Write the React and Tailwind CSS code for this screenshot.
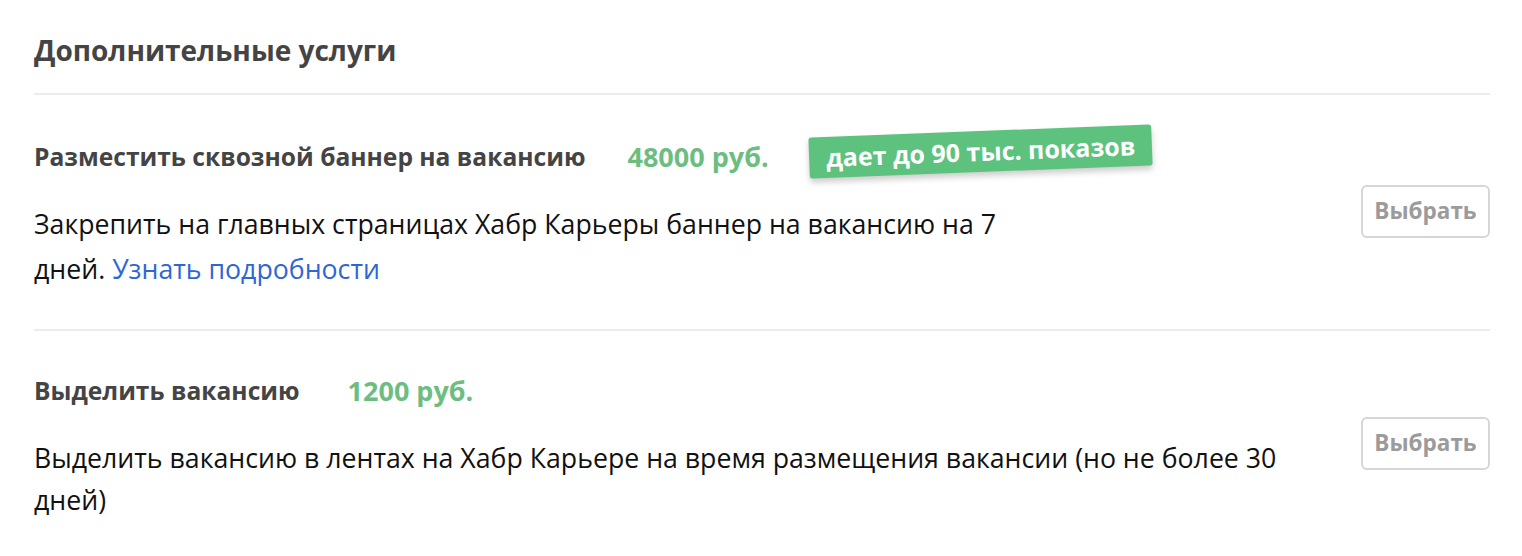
export default function App() {
  return (
    <div className="min-h-screen bg-white pl-[34px] pr-[32px] pt-[28px] font-['Open_Sans',sans-serif]">
      <h2 className="text-[28px] font-bold leading-[44px] text-[#444]">Дополнительные услуги</h2>
      <div className="mt-[21px] border-t-2 border-[#ececec]" />

      <div className="flex items-center justify-between pt-[40px] pb-[38px]">
        <div>
          <div className="flex items-center text-[24.6px] font-bold leading-[44px]">
            <span className="text-[#444]">Разместить сквозной баннер на вакансию</span>
            <span className="ml-[42px] text-[27px] text-[#6dbd80]">48000 руб.</span>
            <span className="ml-[40px] -mt-[12px] rotate-[-2.2deg] rounded-[3px] bg-[#5ec27f] px-[17px] text-[25px] leading-[41px] text-white shadow-[0_4px_6px_rgba(0,0,0,0.2)]">
              дает до 90 тыс. показов
            </span>
          </div>
          <p className="mt-[22px] text-[26.7px] leading-[45px] text-[#111]">
            Закрепить на главных страницах Хабр Карьеры баннер на вакансию на 7
            <br />
            дней. <a href="#" className="text-[#2e66d6]">Узнать подробности</a>
          </p>
        </div>
        <button className="-mt-[4px] h-[53px] w-[129px] rounded-[6px] border-2 border-[#d6d6d6] text-[22.5px] font-bold text-[#9b9b9b]">
          Выбрать
        </button>
      </div>

      <div className="border-t-2 border-[#ececec]" />

      <div className="flex items-center justify-between pt-[38px] pb-[20px]">
        <div>
          <div className="flex items-center text-[24.6px] font-bold leading-[44px]">
            <span className="text-[#444]">Выделить вакансию</span>
            <span className="ml-[48px] text-[27px] text-[#6dbd80]">1200 руб.</span>
          </div>
          <p className="mt-[24px] text-[26.7px] leading-[42px] text-[#111]">
            Выделить вакансию в лентах на Хабр Карьере на время размещения вакансии (но не более 30
            <br />
            дней)
          </p>
        </div>
        <button className="-mt-[4px] h-[53px] w-[129px] rounded-[6px] border-2 border-[#d6d6d6] text-[22.5px] font-bold text-[#9b9b9b]">
          Выбрать
        </button>
      </div>
    </div>
  );
}
